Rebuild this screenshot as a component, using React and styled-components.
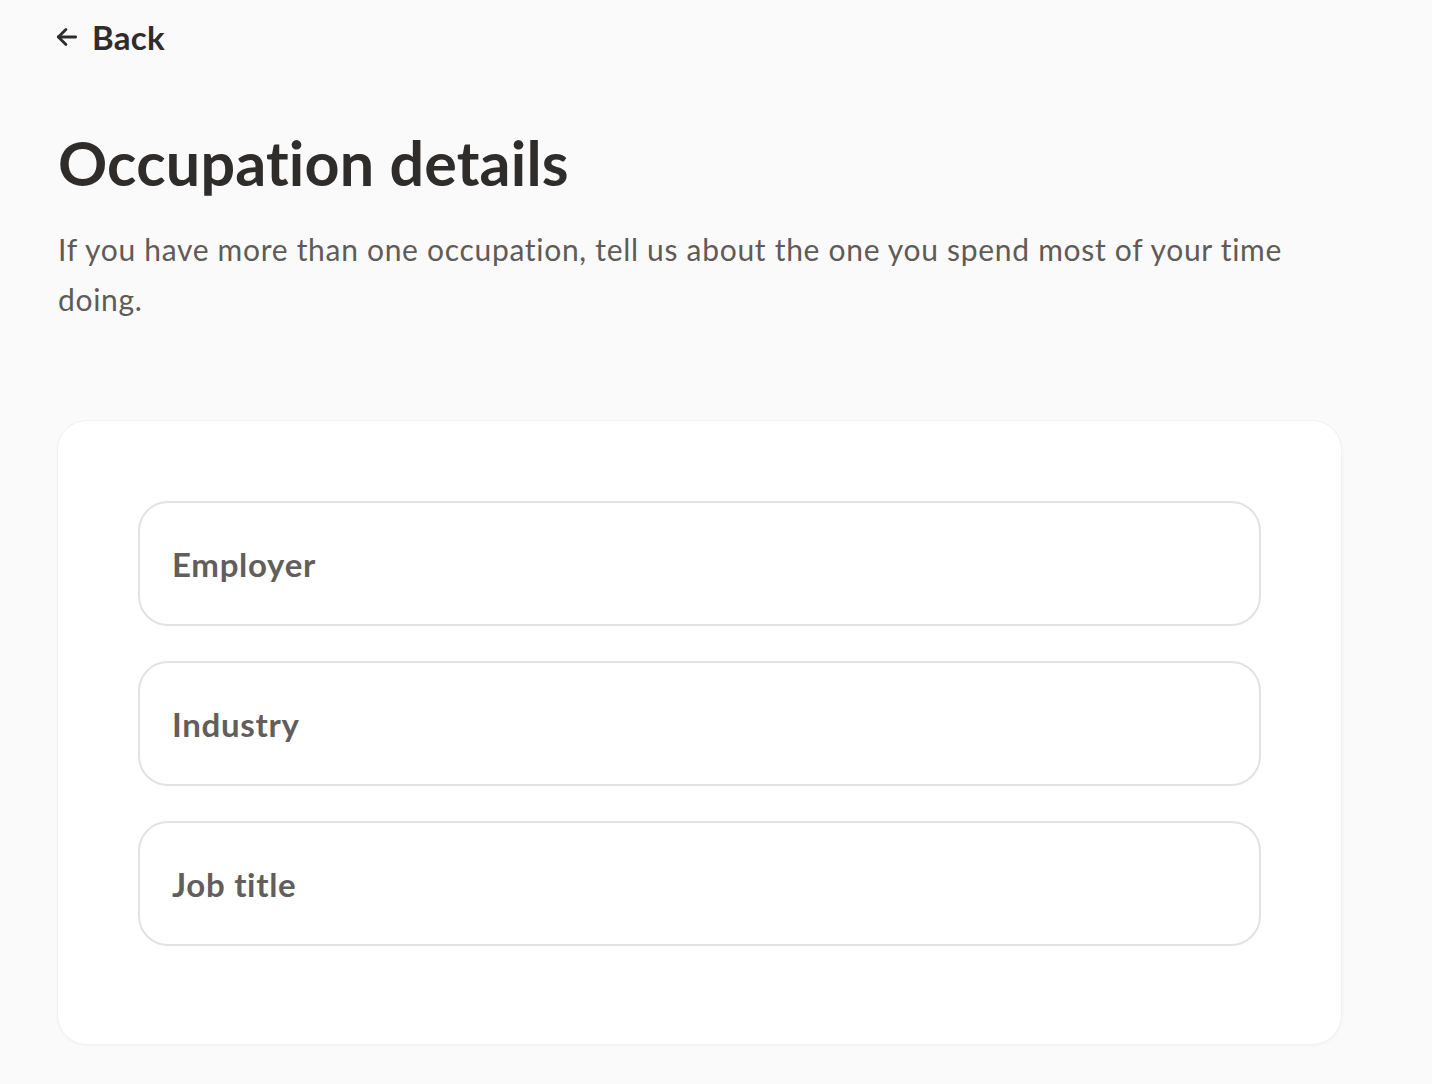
import React from "react";
import styled, { createGlobalStyle } from "styled-components";

const GlobalStyle = createGlobalStyle`
  html, body {
    margin: 0;
    padding: 0;
    background: #fafafa;
  }
  body {
    font-family: Lato, "Noto Sans", sans-serif;
    color: #2f2d2c;
  }
`;

const Page = styled.div`
  padding: 17px 90px 40px 57px;
`;

const BackLink = styled.a`
  display: inline-flex;
  align-items: center;
  gap: 12px;
  margin-left: -3px;
  font-size: 33px;
  font-weight: 700;
  letter-spacing: 0.3px;
  color: #2f2d2c;
  text-decoration: none;
  cursor: pointer;

  svg {
    width: 26px;
    height: 26px;
  }
`;

const Title = styled.h1`
  margin: 69px 0 0 1px;
  font-size: 61px;
  font-weight: 700;
  line-height: 1.2;
  letter-spacing: 0.2px;
  color: #2f2d2c;
`;

const Intro = styled.p`
  margin: 25px 0 0 1px;
  max-width: 1250px;
  font-size: 30px;
  line-height: 50px;
  letter-spacing: 0.7px;
  color: #5f5b58;
`;

const Card = styled.form`
  margin-top: 96px;
  display: flex;
  flex-direction: column;
  gap: 35px;
  padding: 80px 80px 98px;
  background: #fff;
  border: 1px solid #f1f1f1;
  border-radius: 30px;
  box-shadow: 0 1px 3px rgba(0, 0, 0, 0.03);
`;

const Field = styled.input`
  box-sizing: border-box;
  width: 100%;
  height: 125px;
  padding: 0 32px;
  border: 2px solid #e2e2e2;
  border-radius: 30px;
  background: #fff;
  font-family: inherit;
  font-size: 33px;
  font-weight: 700;
  letter-spacing: 0.7px;
  color: #2f2d2c;
  outline: none;

  &::placeholder {
    color: #625e5b;
    opacity: 1;
  }
`;

const ArrowLeft = () => (
  <svg viewBox="0 0 24 24" fill="none" stroke="currentColor" strokeWidth="2.6" strokeLinecap="round" strokeLinejoin="round">
    <path d="M20 12H4" />
    <path d="M11 5l-7 7 7 7" />
  </svg>
);

export default function App() {
  return (
    <>
      <GlobalStyle />
      <Page>
        <BackLink>
          <ArrowLeft />
          Back
        </BackLink>
        <Title>Occupation details</Title>
        <Intro>
          If you have more than one occupation, tell us about the one you spend most of your time doing.
        </Intro>
        <Card>
          <Field placeholder="Employer" />
          <Field placeholder="Industry" />
          <Field placeholder="Job title" />
        </Card>
      </Page>
    </>
  );
}
